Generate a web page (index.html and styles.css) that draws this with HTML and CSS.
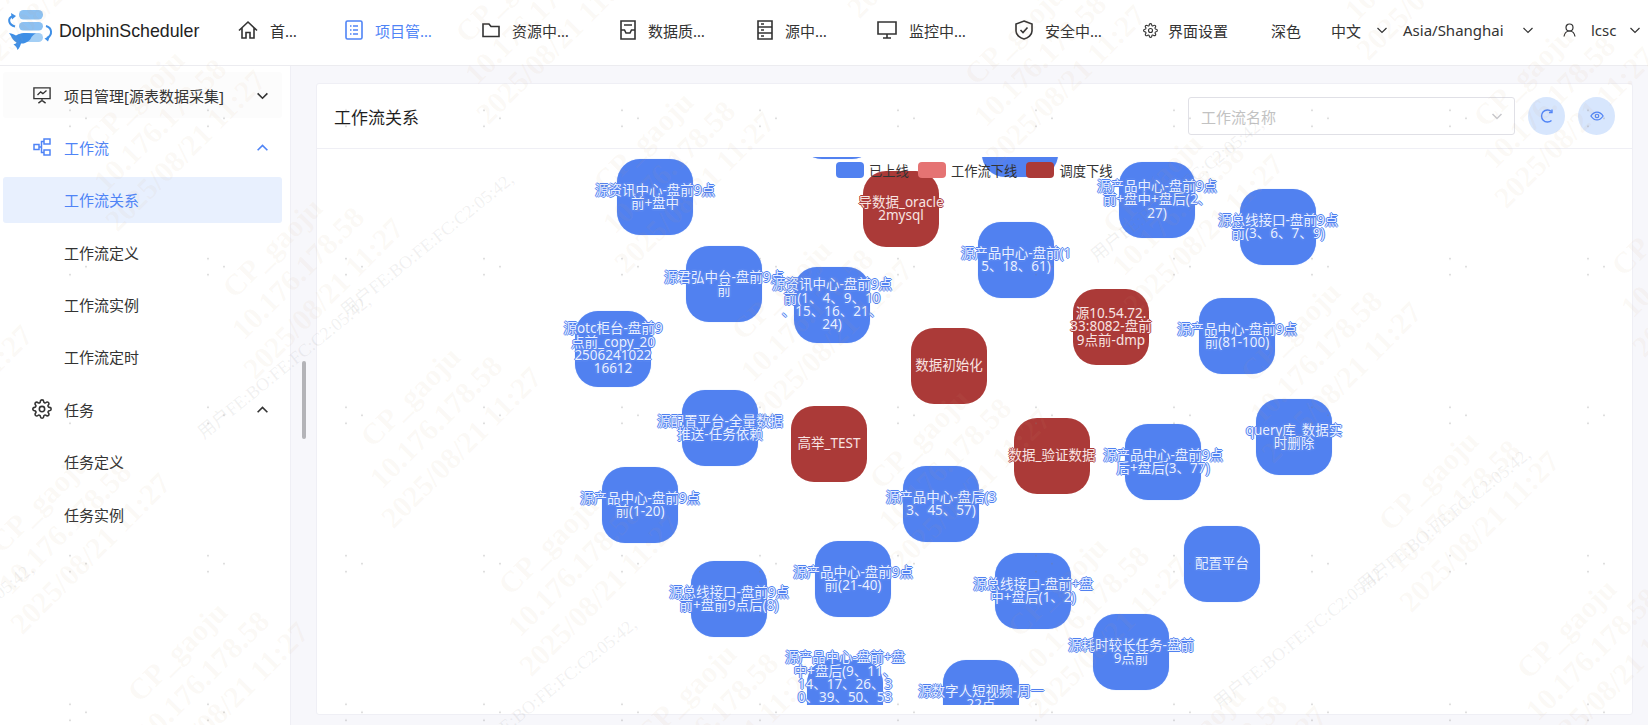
FILE: index.html
```html
<!DOCTYPE html>
<html lang="zh">
<head>
    <meta charset="UTF-8">
    <title>DolphinScheduler</title>
    <link rel="stylesheet" href="styles.css">
</head>
<body>
    <svg class="defs" width="0" height="0">
        <symbol id="gear" viewBox="0 0 24 24"><circle cx="12" cy="12" r="3.2"/><path d="M19.4 15a1.65 1.65 0 0 0 .33 1.82l.06.06a2 2 0 0 1 0 2.83 2 2 0 0 1-2.83 0l-.06-.06a1.65 1.65 0 0 0-1.82-.33 1.65 1.65 0 0 0-1 1.51V21a2 2 0 0 1-2 2 2 2 0 0 1-2-2v-.09A1.65 1.65 0 0 0 9 19.4a1.65 1.65 0 0 0-1.82.33l-.06.06a2 2 0 0 1-2.83 0 2 2 0 0 1 0-2.83l.06-.06a1.65 1.65 0 0 0 .33-1.82 1.65 1.65 0 0 0-1.51-1H3a2 2 0 0 1-2-2 2 2 0 0 1 2-2h.09A1.65 1.65 0 0 0 4.6 9a1.65 1.65 0 0 0-.33-1.82l-.06-.06a2 2 0 0 1 0-2.83 2 2 0 0 1 2.83 0l.06.06a1.65 1.65 0 0 0 1.82.33H9a1.65 1.65 0 0 0 1-1.51V3a2 2 0 0 1 2-2 2 2 0 0 1 2 2v.09a1.65 1.65 0 0 0 1 1.51 1.65 1.65 0 0 0 1.82-.33l.06-.06a2 2 0 0 1 2.83 0 2 2 0 0 1 0 2.83l-.06.06a1.65 1.65 0 0 0-.33 1.82V9a1.65 1.65 0 0 0 1.51 1H21a2 2 0 0 1 2 2 2 2 0 0 1-2 2h-.09a1.65 1.65 0 0 0-1.51 1z"/></symbol>
        <symbol id="down" viewBox="0 0 12 12"><path d="M1.5 4l4.5 4.5L10.5 4"/></symbol>
        <symbol id="up" viewBox="0 0 12 12"><path d="M1.5 8.5L6 4l4.5 4.5"/></symbol>
    </svg>

    <header class="topbar">
        <div class="logo">
            <svg class="logo-mark" width="56" height="56" viewBox="0 0 56 56">
                <rect x="19" y="10" width="24" height="9.5" rx="4.5" fill="#8cc1f2"/>
                <rect x="19" y="22" width="24" height="8.5" rx="4.2" fill="#8cc1f2"/>
                <rect x="19" y="33" width="24" height="9" rx="4.5" fill="#a4cff5"/>
                <path d="M15 26.5C9 25 6.5 18.5 13 16" fill="none" stroke="#3f8fe6" stroke-width="2"/>
                <path d="M11 13l5 3-4 3.5z" fill="#3f8fe6"/>
                <path d="M46 26c6 1.5 7 9 1 12" fill="none" stroke="#3f8fe6" stroke-width="2"/>
                <path d="M50 36l-5.500 2.500 3.500 3z" fill="#3f8fe6"/>
                <path d="M9 33c3 .5 5 1.500 7 2.500 5-3.500 13-2.500 20-2-2.500 1-3.500 2.500-4.500 3.500-1 3.500-6 7-10.500 6.500-.5 2-1.500 4.500-3.500 6.500-.5-2-1.500-4-4-5.500 1.500-.5 2.500-1 3-2-3-1.500-5-5-5.500-6.500-.5-1-1.500-2-2-3z" fill="#3f8fe6"/>
            </svg>
            <span class="logo-text">DolphinScheduler</span>
        </div>
        <nav class="nav">
            <a class="nav-item w-home">
                <svg class="nav-icon" width="20" height="20" viewBox="0 0 20 20"><path d="M1 10.500L10 2l9 8.500M4 8v10h4v-5.500h4V18h4V8"/></svg>
                <span class="nav-label l-1">首页</span>
            </a>
            <a class="nav-item w-project active">
                <svg class="nav-icon" width="18" height="20" viewBox="0 0 18 20"><rect x="1" y="1" width="16" height="18" rx="1.500"/><path d="M8 6h5M8 10h5M8 14h5M5 6h1.500M5 10h1.500M5 14h1.500"/></svg>
                <span class="nav-label l-3">项目管理</span>
            </a>
            <a class="nav-item w-res">
                <svg class="nav-icon" width="18" height="16" viewBox="0 0 18 16"><path d="M1 2h6l2 2.500h8V14.500H1z"/></svg>
                <span class="nav-label l-3">资源中心</span>
            </a>
            <a class="nav-item w-data">
                <svg class="nav-icon" width="16" height="20" viewBox="0 0 16 20"><path d="M1 1h14v18H1zM4 5h8M1 10h3.500l1.500 3h4l1.500-3H15"/></svg>
                <span class="nav-label l-3">数据质量</span>
            </a>
            <a class="nav-item w-source">
                <svg class="nav-icon" width="16" height="20" viewBox="0 0 16 20"><path d="M1 1h14v18H1zM1 7h14M1 13h14M4 4h3M4 10h3M4 16h3"/></svg>
                <span class="nav-label l-2">源中心</span>
            </a>
            <a class="nav-item w-monitor">
                <svg class="nav-icon" width="20" height="20" viewBox="0 0 20 20"><path d="M1 2h18v12H1zM10 14v4M6 18h8"/></svg>
                <span class="nav-label l-3">监控中心</span>
            </a>
            <a class="nav-item w-safe">
                <svg class="nav-icon" width="18" height="20" viewBox="0 0 18 20"><path d="M9 1l8 3v7c0 4-4 7-8 8-4-1-8-4-8-8V4zM5.500 10l2.500 2.500 4.500-5"/></svg>
                <span class="nav-label l-3">安全中心</span>
            </a>
            <a class="nav-item w-ui">
                <svg class="icon-gear nav-gear" width="15" height="15"><use href="#gear"/></svg>
                <span>界面设置</span>
            </a>
            <a class="nav-item w-theme">深色</a>
            <a class="nav-item w-lang">中文<svg class="chev chev-top" width="12" height="12"><use href="#down"/></svg></a>
            <a class="nav-item w-zone">Asia/Shanghai<svg class="chev chev-top" width="12" height="12"><use href="#down"/></svg></a>
            <a class="nav-item w-user">
                <svg class="nav-icon thin" width="13" height="14" viewBox="0 0 13 14"><circle cx="6.500" cy="4.500" r="3.500"/><path d="M1 13.500c.5-3 2.500-5.500 5.500-5.500s5 2.500 5.500 5.500"/></svg>
                <span class="user-name">lcsc</span>
                <svg class="chev chev-top" width="12" height="12"><use href="#down"/></svg>
            </a>
        </nav>
    </header>

    <div class="layout">
        <aside class="sidebar">
            <div class="menu-row hover">
                <svg class="menu-icon" width="20" height="20" viewBox="0 0 20 20"><path d="M1 2h18v12H1zM5 10l3.500-3.500 2.500 2L15 5M10 14v2M6 19l4-3 4 3"/></svg>
                <span class="menu-text">项目管理[源表数据采集]</span>
                <svg class="chev" width="13" height="13"><use href="#down"/></svg>
            </div>
            <div class="menu-row open">
                <svg class="menu-icon" width="18" height="18" viewBox="0 0 18 18"><rect x="1" y="6.500" width="5" height="5"/><rect x="11" y="1" width="6" height="5"/><rect x="11" y="12" width="6" height="5"/><path d="M6 9h2.500V3.500H11M8.500 9v5.500H11"/></svg>
                <span class="menu-text">工作流</span>
                <svg class="chev" width="13" height="13"><use href="#up"/></svg>
            </div>
            <div class="menu-row sub current"><span class="menu-text">工作流关系</span></div>
            <div class="menu-row sub"><span class="menu-text">工作流定义</span></div>
            <div class="menu-row sub"><span class="menu-text">工作流实例</span></div>
            <div class="menu-row sub"><span class="menu-text">工作流定时</span></div>
            <div class="menu-row">
                <svg class="menu-icon icon-gear big-gear" width="20" height="20"><use href="#gear"/></svg>
                <span class="menu-text">任务</span>
                <svg class="chev" width="13" height="13"><use href="#up"/></svg>
            </div>
            <div class="menu-row sub"><span class="menu-text">任务定义</span></div>
            <div class="menu-row sub"><span class="menu-text">任务实例</span></div>
        </aside>

        <main class="main">
            <div class="scroll-thumb"></div>
            <section class="card">
                <div class="card-head">
                    <h2 class="card-title">工作流关系</h2>
                    <div class="select">
                        <span>工作流名称</span>
                        <svg class="chev" width="12" height="12"><use href="#down"/></svg>
                    </div>
                    <button class="round-btn" type="button">
                        <svg width="16" height="16" viewBox="0 0 16 16"><path d="M12.500 3.500A6 6 0 1 0 12.500 12.500"/><path d="M13 1.500V4.500H10"/></svg>
                    </button>
                    <button class="round-btn" type="button">
                        <svg width="14" height="14" viewBox="0 0 16 16"><path d="M1 8c2-3 4.500-4.500 7-4.500S13 5 15 8c-2 3-4.500 4.500-7 4.500S3 11 1 8z"/><circle cx="8" cy="8" r="2"/></svg>
                    </button>
                </div>
                <div class="card-body">
                    <div class="graph">
                        <div class="node blue n-top-a"></div>
                        <div class="node blue n-top-b"></div>
                        <div class="node blue n1"><span>源资讯中心-盘前9点<br>前+盘中</span></div>
                        <div class="node red n2"><span>导数据_oracle<br>2mysql</span></div>
                        <div class="node blue n3"><span>源产品中心-盘前(1<br>5、18、61)</span></div>
                        <div class="node blue n4"><span>源君弘中台-盘前9点<br>前</span></div>
                        <div class="node blue n5"><span>源资讯中心-盘前9点<br>前(1、4、9、10<br>、15、16、21、<br>24)</span></div>
                        <div class="node blue n6"><span>源otc柜台-盘前9<br>点前_copy_20<br>2506241022<br>16612</span></div>
                        <div class="node red n7"><span>数据初始化</span></div>
                        <div class="node red n8"><span>源10.54.72.<br>33:8082-盘前<br>9点前-dmp</span></div>
                        <div class="node blue n9"><span>源产品中心-盘前9点<br>前(81-100)</span></div>
                        <div class="node blue n10"><span>源产品中心-盘前9点<br>前+盘中+盘后(2、<br>27)</span></div>
                        <div class="node blue n11"><span>源总线接口-盘前9点<br>前(3、6、7、9)</span></div>
                        <div class="node blue n12"><span>query库_数据实<br>时删除</span></div>
                        <div class="node blue n13"><span>源配置平台-全量数据<br>推送-任务依赖</span></div>
                        <div class="node red n14"><span>高举_TEST</span></div>
                        <div class="node red n15"><span>数据_验证数据</span></div>
                        <div class="node blue n16"><span>源产品中心-盘前9点<br>前(1-20)</span></div>
                        <div class="node blue n17"><span>源产品中心-盘后(3<br>3、45、57)</span></div>
                        <div class="node blue n18"><span>源产品中心-盘前9点<br>后+盘后(3、77)</span></div>
                        <div class="node blue n19"><span>源总线接口-盘前9点<br>前+盘前9点后(8)</span></div>
                        <div class="node blue n20"><span>源产品中心-盘前9点<br>前(21-40)</span></div>
                        <div class="node blue n21"><span>源总线接口-盘前+盘<br>中+盘后(1、2)</span></div>
                        <div class="node blue n22"><span>配置平台</span></div>
                        <div class="node blue n23"><span>源耗时较长任务-盘前<br>9点前</span></div>
                        <div class="node blue n24"><span>源产品中心-盘前+盘<br>中+盘后(9、11、<br>14、17、26、3<br>0、39、50、53<br>、54、55、56、<br>58、60)<br>&nbsp;</span></div>
                        <div class="node blue n25"><span>源数字人短视频-周一<br>22点</span></div>

                        <div class="legend">
                            <i class="swatch s-blue"></i><span class="legend-text">已上线</span>
                            <i class="swatch s-pink"></i><span class="legend-text">工作流下线</span>
                            <i class="swatch s-red"></i><span class="legend-text">调度下线</span>
                        </div>
                    </div>
                </div>
            </section>
        </main>
    </div>

    <div class="watermark" id="watermark"></div>
    <script src="script.js"></script>
</body>
</html>
```

FILE: styles.css
```css
* {
    box-sizing: border-box;
}

html, body {
    margin: 0;
    height: 100%;
    overflow: hidden;
}

body {
    font-family: "Noto Sans", "Noto Sans CJK SC", sans-serif;
    font-size: 15px;
    color: #333;
    background-color: #fff;
}

.defs {
    position: absolute;
}

/* top bar */
.topbar {
    display: flex;
    height: 66px;
    border-bottom: 1px solid #ececf0;
}

.logo {
    display: flex;
    width: 238px;
    flex-shrink: 0;
}

.logo-mark {
    margin-right: 3px;
    flex-shrink: 0;
}

.logo-text {
    font-family: "Liberation Sans", sans-serif;
    font-size: 17.8px;
    line-height: 63px;
    color: #222;
}

.nav {
    display: flex;
    align-items: center;
    height: 60px;
}

.nav-item {
    display: flex;
    align-items: center;
    color: #333;
    flex-shrink: 0;
}

.nav-item.active {
    color: #4f84f6;
}

.nav-icon {
    fill: none;
    stroke: currentColor;
    stroke-width: 1.6;
    flex-shrink: 0;
}

.nav-icon.thin {
    stroke-width: 1.2;
}

.nav-label {
    margin-left: 12px;
    white-space: nowrap;
    overflow: hidden;
    text-overflow: ellipsis;
}

.l-1 { width: 29px; }
.l-2 { width: 44px; }
.l-3 { width: 58px; }

.w-home { width: 107px; }
.w-project { width: 137px; }
.w-res { width: 138px; }
.w-data { width: 137px; }
.w-source { width: 120px; }
.w-monitor { width: 138px; }
.w-safe { width: 128px; }
.w-ui { width: 128px; }
.w-theme { width: 60px; }
.w-lang { width: 72px; }
.w-zone { width: 160px; }
.w-user { width: 85px; }

.icon-gear {
    fill: none;
    stroke: #333;
    stroke-width: 2;
}

.nav-gear {
    margin-right: 10px;
    stroke-width: 1.8;
}

.chev {
    fill: none;
    stroke: #333;
    stroke-width: 1.5;
    flex-shrink: 0;
}

.chev-top {
    stroke-width: 1.2;
}

.w-lang .chev { margin-left: 15px; }
.w-zone .chev { margin-left: 18px; }
.user-name { margin: 0 13px 0 15px; }

/* page body */
.layout {
    display: flex;
    height: 659px;
}

.sidebar {
    width: 291px;
    flex-shrink: 0;
    padding: 6px 8px 0 3px;
    border-right: 1px solid #efeff5;
    display: flex;
    flex-direction: column;
    gap: 6.4px;
}

.menu-row {
    display: flex;
    align-items: center;
    height: 46px;
    padding: 0 13px 0 30px;
    border-radius: 3px;
    color: #333;
    flex-shrink: 0;
}

.menu-row.hover {
    background-color: #fcfcfc;
}

.menu-icon {
    width: 18px;
    margin-right: 13px;
    fill: none;
    stroke: #333;
    stroke-width: 1.500;
    flex-shrink: 0;
}

.menu-icon.big-gear {
    width: 20px;
    margin-left: -1px;
    margin-right: 12px;
    stroke-width: 1.9;
}

.menu-text {
    flex: 1;
}

.menu-row.open,
.menu-row.current {
    color: #4f84f6;
}

.menu-row.open .menu-icon,
.menu-row.open .chev {
    stroke: #4f84f6;
}

.menu-row.sub {
    padding-left: 61px;
}

.menu-row.current {
    background-color: #e8f0fe;
}

.main {
    flex: 1;
    position: relative;
    padding: 17px 15px 10px 25px;
    background-color: #f7f7fb;
    display: flex;
}

.scroll-thumb {
    position: absolute;
    left: 11px;
    top: 295px;
    width: 4px;
    height: 78px;
    border-radius: 2px;
    background-color: #b4b4b8;
}

.card {
    flex: 1;
    display: flex;
    flex-direction: column;
    background-color: #fff;
    border: 1px solid #efeff5;
    border-radius: 3px;
}

.card-head {
    display: flex;
    align-items: center;
    height: 65px;
    padding: 0 17px;
    border-bottom: 1px solid #efeff5;
    flex-shrink: 0;
}

.card-title {
    flex: 1;
    margin: 0;
    font-size: 17px;
    font-weight: 400;
    color: #1f1f1f;
}

.select {
    display: flex;
    align-items: center;
    justify-content: space-between;
    width: 327px;
    height: 38px;
    padding: 0 11px 0 12px;
    border: 1px solid #e0e0e6;
    border-radius: 3px;
    color: #c2c2c2;
}

.select .chev {
    stroke: #c8c8cc;
}

.round-btn {
    width: 37px;
    height: 38px;
    margin-left: 13px;
    padding: 0;
    border: none;
    border-radius: 50%;
    background-color: #d7e6fd;
    display: flex;
    align-items: center;
    justify-content: center;
}

.round-btn svg {
    fill: none;
    stroke: #4f84f6;
    stroke-width: 1.4;
}

.card-body {
    flex: 1;
    padding: 8px 0 9px;
    display: flex;
}

.graph {
    flex: 1;
    position: relative;
    overflow: hidden;
}

/* nodes: place on the graph canvas is the data */
.node {
    position: absolute;
    width: 76px;
    height: 76px;
    border-radius: 23px;
    display: flex;
    align-items: center;
    justify-content: center;
    font-size: 13.5px;
    line-height: 13.3px;
    text-align: center;
    white-space: nowrap;
}

.node.blue {
    background-color: #5181f0;
    box-shadow: 0 0 1px #9dbcf8;
    color: #e9f0ff;
    text-shadow: 1px 0 0 #5181f0, -1px 0 0 #5181f0, 0 1px 0 #5181f0, 0 -1px 0 #5181f0, 0 0 2px #cfe0ff;
}

.node.red {
    background-color: #ab3a38;
    color: #f8e4e2;
    text-shadow: 1px 0 0 #ab3a38, -1px 0 0 #ab3a38, 0 1px 0 #ab3a38, 0 -1px 0 #ab3a38;
}

.n-top-a { left: 482px; top: -74px; }
.n-top-b { left: 665px; top: -56px; }
.n1 { left: 300px; top: 2px; }
.n2 { left: 546px; top: 14px; }
.n3 { left: 661px; top: 65px; }
.n4 { left: 369px; top: 89px; }
.n5 { left: 477px; top: 110px; }
.n6 { left: 258px; top: 154px; }
.n7 { left: 594px; top: 171px; }
.n8 { left: 756px; top: 132px; }
.n9 { left: 882px; top: 141px; }
.n10 { left: 802px; top: 5px; }
.n11 { left: 923px; top: 32px; }
.n12 { left: 939px; top: 242px; }
.n13 { left: 365px; top: 233px; }
.n14 { left: 474px; top: 249px; }
.n15 { left: 697px; top: 261px; }
.n16 { left: 285px; top: 310px; }
.n17 { left: 586px; top: 309px; }
.n18 { left: 808px; top: 267px; }
.n19 { left: 374px; top: 404px; }
.n20 { left: 498px; top: 384px; }
.n21 { left: 678px; top: 396px; }
.n22 { left: 867px; top: 369px; }
.n23 { left: 776px; top: 457px; }
.n24 { left: 490px; top: 503px; }
.n25 { left: 626px; top: 503px; }

.legend {
    position: absolute;
    left: 519px;
    top: 5px;
    display: flex;
    align-items: center;
    height: 16px;
    font-size: 13.3px;
    color: #333;
}

.swatch {
    display: block;
    width: 28px;
    height: 16px;
    border-radius: 4px;
}

.s-blue { background-color: #5181f0; }
.s-pink { background-color: #e57373; }
.s-red { background-color: #ab3a38; }

.legend-text {
    margin-left: 5px;
    margin-right: 9px;
}

/* watermark lies over the whole page */
.watermark {
    position: absolute;
    left: 0;
    top: 0;
    width: 1648px;
    height: 725px;
    overflow: hidden;
    pointer-events: none;
    background-image:
        radial-gradient(circle, rgba(120, 120, 120, 0.3) 0.8px, transparent 1.2px),
        radial-gradient(circle, rgba(120, 120, 120, 0.3) 0.8px, transparent 1.2px),
        radial-gradient(circle, rgba(120, 120, 120, 0.3) 0.8px, transparent 1.2px);
    background-size: 138px 148.5px;
    background-position: 1px 36px, 17px 44px, 1px 52px;
}

.wm-block {
    position: absolute;
    width: 240px;
    margin-left: -120px;
    margin-top: -54px;
    transform: rotate(-45deg);
    font-family: "Liberation Serif", serif;
    font-size: 30px;
    font-weight: 700;
    line-height: 36px;
    text-align: center;
    white-space: nowrap;
    color: rgba(205, 160, 120, 0.07);
}

.wm-user {
    position: absolute;
    transform-origin: 100% 50%;
    transform: translate(-100%, -50%) rotate(-39deg);
    font-family: "Liberation Serif", "Noto Sans CJK SC", serif;
    font-size: 18px;
    white-space: nowrap;
    color: rgba(140, 140, 140, 0.12);
}
```

FILE: script.js
```js
// watermark tiles
const wm = document.getElementById('watermark');

for (let i = -6; i < 10; i++) {
    for (let j = -6; j < 10; j++) {
        const x = 65 + i * 138 + j * 233;
        const y = 528 + i * 148.5 - j * 255;
        if (x < -150 || x > 1800 || y < -150 || y > 880) continue;
        const block = document.createElement('div');
        block.className = 'wm-block';
        block.style.left = x + 'px';
        block.style.top = y + 'px';
        block.innerHTML = 'CP_gaoju<br>10.176.178.58<br>2025/08/21 11:27';
        wm.appendChild(block);
    }
}

// user mac line, placed by the end of the text
const ends = [[367, 297], [510, 175], [1260, 120], [1527, 450], [1383, 567], [633, 620], [30, 565]];

ends.forEach(([x, y]) => {
    const line = document.createElement('div');
    line.className = 'wm-user';
    line.style.left = x + 'px';
    line.style.top = y + 'px';
    line.textContent = '用户FE:BO:FE:FC:C2:05:42,';
    wm.appendChild(line);
});
```
